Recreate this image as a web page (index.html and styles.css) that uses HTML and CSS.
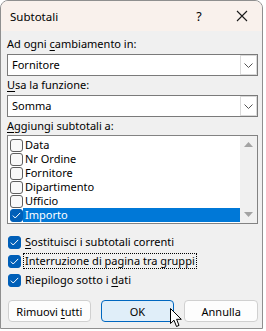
FILE: index.html
```html
<!DOCTYPE html>
<html>
<head>
<meta charset="utf-8">
<link rel="stylesheet" href="styles.css">
</head>
<body>
<div class="window">
  <div class="titlebar">
    <span class="title">Subtotali</span>
    <span class="help">?</span>
    <span class="close">
      <svg width="12" height="12" viewBox="0 0 12 12"><path d="M1 1 L11 11 M11 1 L1 11" stroke="#1a1a1a" stroke-width="1.1" fill="none"/></svg>
    </span>
  </div>
  <div class="content">
    <div class="label lbl1">Ad ogni <u>c</u>ambiamento in:</div>
    <div class="combo">
      <span class="combo-text">Fornitore</span>
      <span class="combo-btn"><svg width="9" height="5" viewBox="0 0 9 5"><path d="M0.5 0.5 L4.5 4.5 L8.5 0.5" stroke="#555" stroke-width="1" fill="none"/></svg></span>
    </div>
    <div class="label lbl2"><u>U</u>sa la funzione:</div>
    <div class="combo">
      <span class="combo-text">Somma</span>
      <span class="combo-btn"><svg width="9" height="5" viewBox="0 0 9 5"><path d="M0.5 0.5 L4.5 4.5 L8.5 0.5" stroke="#555" stroke-width="1" fill="none"/></svg></span>
    </div>
    <div class="label lbl3"><u>A</u>ggiungi subtotali a:</div>
    <div class="listbox">
      <div class="items">
        <div class="item"><span class="cb"></span><span class="itext">Data</span></div>
        <div class="item"><span class="cb"></span><span class="itext">Nr Ordine</span></div>
        <div class="item"><span class="cb"></span><span class="itext">Fornitore</span></div>
        <div class="item"><span class="cb"></span><span class="itext">Dipartimento</span></div>
        <div class="item"><span class="cb"></span><span class="itext">Ufficio</span></div>
        <div class="item selected"><span class="cb checked"><svg width="9" height="7" viewBox="0 0 9 7"><path d="M0.8 3.6 L3.2 6 L8.2 0.9" stroke="#fff" stroke-width="1" fill="none"/></svg></span><span class="itext">Importo</span></div>
      </div>
      <div class="scrollbar">
        <svg width="9" height="5" viewBox="0 0 9 5"><path d="M0 5 L4.5 0 L9 5 Z" fill="#a3a3a3"/></svg>
        <svg width="9" height="5" viewBox="0 0 9 5"><path d="M0 0 L4.5 5 L9 0 Z" fill="#a3a3a3"/></svg>
      </div>
    </div>
    <div class="options">
      <div class="opt"><span class="cb checked"><svg width="9" height="7" viewBox="0 0 9 7"><path d="M0.8 3.6 L3.2 6 L8.2 0.9" stroke="#fff" stroke-width="1" fill="none"/></svg></span><span class="otext"><u>S</u>ostituisci i subtotali correnti</span></div>
      <div class="opt"><span class="cb checked"><svg width="9" height="7" viewBox="0 0 9 7"><path d="M0.8 3.6 L3.2 6 L8.2 0.9" stroke="#fff" stroke-width="1" fill="none"/></svg></span><span class="otext focus">Interruzione di pagina tra gruppi</span></div>
      <div class="opt"><span class="cb checked"><svg width="9" height="7" viewBox="0 0 9 7"><path d="M0.8 3.6 L3.2 6 L8.2 0.9" stroke="#fff" stroke-width="1" fill="none"/></svg></span><span class="otext">Riepilogo sotto i <u>d</u>ati</span></div>
    </div>
    <div class="buttons">
      <button class="btn wide">Rimuovi <u>t</u>utti</button>
      <button class="btn primary">OK</button>
      <button class="btn">Annulla</button>
    </div>
  </div>
  <svg class="cursor" width="13" height="20" viewBox="0 0 13 20"><path d="M0.5 0.5 L0.5 15.5 L4 12.2 L6.5 18.5 L9 17.4 L6.6 11.3 L11.3 11.3 Z" fill="#fff" stroke="#000" stroke-width="1" stroke-linejoin="miter"/></svg>
</div>
</body>
</html>
```
FILE: styles.css
```css
* { box-sizing: border-box; }
html, body { margin: 0; padding: 0; background: #ffffff; }
body {
  font-family: "Noto Sans", "Liberation Sans", sans-serif;
  font-size: 11px;
  color: #000;
}
.window {
  position: relative;
  width: 263px;
  height: 329px;
  background: #f0f0f0;
  border: 1px solid #8f8f8f;
  border-radius: 8px 8px 0 0;
  overflow: hidden;
}
.titlebar {
  height: 30px;
  background: #f9f1ec;
  display: flex;
  align-items: center;
  padding-left: 9px;
}
.title { flex: 1; font-size: 11.5px; color: #000; }
.help { width: 14px; text-align: center; margin-right: 30px; font-size: 12.5px; }
.close { width: 12px; height: 12px; margin-right: 14px; display: flex; }
.content { padding: 0 4px 0 6px; display: flex; flex-direction: column; }
.label { height: 16px; line-height: 16px; }
.lbl1 { margin-top: 5px; margin-bottom: 2px; }
.lbl2 { margin-top: 1px; margin-bottom: 2px; }
.lbl3 { margin-top: 1px; margin-bottom: 1px; }
u { text-decoration-thickness: 1px; text-underline-offset: 2px; }
.combo {
  height: 22px;
  border: 1px solid #7a7a7a;
  background: #fff;
  display: flex;
  align-items: stretch;
}
.combo-text { flex: 1; padding-left: 4px; line-height: 20px; }
.combo-btn {
  width: 17px;
  border: 1px solid #dadada;
  display: flex;
  align-items: center;
  justify-content: center;
}
.listbox {
  height: 89px;
  border: 1px solid #828282;
  background: #fff;
  display: flex;
}
.items { flex: 1; padding-top: 2px; padding-left: 2px; }
.item { height: 14px; display: flex; align-items: center; }
.itext { flex: 1; height: 14px; line-height: 14px; padding-left: 2px; overflow: hidden; }
.item.selected .itext { background: #0078d7; color: #fff; }
.cb {
  width: 13px;
  height: 13px;
  border: 1px solid #5f5f5f;
  border-radius: 3px;
  background: #f9f9f9;
  display: flex;
  align-items: center;
  justify-content: center;
  flex: none;
}
.cb.checked { background: #005fb8; border-color: #005fb8; }
.scrollbar {
  width: 17px;
  background: #f0f0f0;
  display: flex;
  flex-direction: column;
  justify-content: space-between;
  align-items: center;
  padding: 6px 0 6px;
}
.options { margin-top: 11px; display: flex; flex-direction: column; gap: 5px; padding-left: 1px; }
.opt { height: 14px; display: flex; align-items: center; gap: 3px; }
.otext { line-height: 14px; padding: 0 1px; }
.focus { outline: 1px dotted #000; outline-offset: 0; }
.buttons { margin-top: 13px; display: flex; gap: 10px; padding-left: 1px; }
.btn {
  font-family: inherit;
  font-size: 11px;
  color: #000;
  height: 22px;
  width: 74px;
  background: #fdfdfd;
  border: 1px solid #d0d0d0;
  border-radius: 4px;
  padding: 0;
}
.btn.wide { width: 83px; }
.btn.primary { background: #e0eef9; border-color: #0067c0; }
.cursor { position: absolute; left: 169px; top: 307px; }
```
